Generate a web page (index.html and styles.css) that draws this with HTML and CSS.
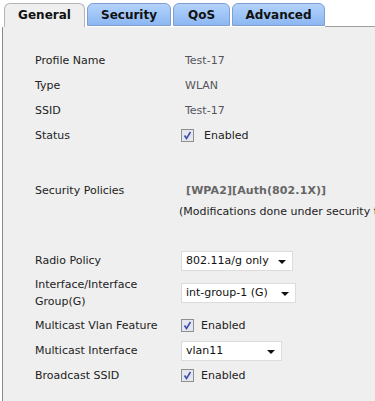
FILE: index.html
```html
<!DOCTYPE html>
<html>
<head>
    <title>WLAN Edit</title>
    <link rel="stylesheet" href="styles.css">
</head>
<body>
    <div class="tabs">
        <div class="tab active">General</div>
        <div class="tab tab-security">Security</div>
        <div class="tab tab-qos">QoS</div>
        <div class="tab tab-adv">Advanced</div>
        <div class="tab-rest"></div>
    </div>
    <div class="panel">
        <div class="row"><span class="label">Profile Name</span><span class="value">Test-17</span></div>
        <div class="row"><span class="label">Type</span><span class="value">WLAN</span></div>
        <div class="row"><span class="label">SSID</span><span class="value">Test-17</span></div>
        <div class="row"><span class="label">Status</span><span class="check wide"><svg width="13" height="13" viewBox="0 0 13 13"><rect x="0.5" y="0.5" width="12" height="12" fill="#e6e6ee" stroke="#8e8f8f"/><path d="M3.5 6.5 L5.5 9.5 L9.5 3" fill="none" stroke="#3d4fb0" stroke-width="1.6"/></svg>Enabled</span></div>

        <div class="row policies">
            <span class="label">Security Policies</span>
            <span class="policy-val">
                <span class="policy">[WPA2][Auth(802.1X)]</span>
                <span class="note">(Modifications done under security tab will appear after applying the changes.)</span>
            </span>
        </div>

        <div class="row radio"><span class="label">Radio Policy</span><span class="select s1">802.11a/g only<i class="arrow"></i></span></div>
        <div class="row tall"><span class="label">Interface/Interface<br>Group(G)</span><span class="select s2">int-group-1 (G)<i class="arrow"></i></span></div>
        <div class="row"><span class="label">Multicast Vlan Feature</span><span class="check"><svg width="13" height="13" viewBox="0 0 13 13"><rect x="0.5" y="0.5" width="12" height="12" fill="#e6e6ee" stroke="#8e8f8f"/><path d="M3.5 6.5 L5.5 9.5 L9.5 3" fill="none" stroke="#3d4fb0" stroke-width="1.6"/></svg>Enabled</span></div>
        <div class="row"><span class="label">Multicast Interface</span><span class="select s3">vlan11<i class="arrow"></i></span></div>
        <div class="row"><span class="label">Broadcast SSID</span><span class="check"><svg width="13" height="13" viewBox="0 0 13 13"><rect x="0.5" y="0.5" width="12" height="12" fill="#e6e6ee" stroke="#8e8f8f"/><path d="M3.5 6.5 L5.5 9.5 L9.5 3" fill="none" stroke="#3d4fb0" stroke-width="1.6"/></svg>Enabled</span></div>
    </div>
</body>
</html>
```

FILE: styles.css
```css
body {
    margin: 0;
    background-color: #ffffff;
    font-family: "DejaVu Sans", Verdana, sans-serif;
    font-size: 11px;
    color: #222222;
    height: 401px;
    overflow: hidden;
}
.tabs {
    display: flex;
    align-items: flex-end;
    height: 27px;
    padding-left: 4px;
}
.tab {
    line-height: 22px;
    font-weight: bold;
    font-size: 12px;
    text-align: center;
    border: 1px solid #7e9fd0;
    border-radius: 6px 6px 0 0;
    background: linear-gradient(#b3d3fb, #8cb7f2);
    color: #111111;
    margin-right: 2px;
    box-sizing: border-box;
    height: 23px;
    margin-bottom: 1px;
}
.tab.active {
    width: 81px;
    height: 24px;
    margin-bottom: 0;
    background: #efefef;
    border: 1px solid #b4b4b4;
    border-bottom: none;
}
.tab-security {
    width: 84px;
}
.tab-qos {
    width: 57px;
}
.tab-adv {
    width: 93px;
}
.tab-rest {
    flex: 1;
    border-bottom: 1px solid #a0a0a0;
    margin-left: -2px;
}
.panel {
    margin-left: 2px;
    background-color: #efefef;
    border-left: 1px solid #8a8a8a;
    padding: 21px 0 0 32px;
    height: 374px;
    box-sizing: border-box;
    overflow: hidden;
}
.row {
    display: flex;
    align-items: center;
    height: 25px;
}
.label {
    width: 144px;
    flex-shrink: 0;
}
.value {
    color: #555560;
    padding-left: 6px;
}
.check {
    display: flex;
    align-items: center;
    padding-left: 2px;
    gap: 7px;
}
.check.wide {
    gap: 10px;
}
.check svg {
    display: block;
}
.policies {
    margin-top: 29px;
    height: 43px;
    align-items: flex-start;
    padding-top: 7px;
    box-sizing: border-box;
}
.policy-val {
    display: flex;
    flex-direction: column;
    white-space: nowrap;
}
.policy {
    font-weight: bold;
    color: #666666;
    padding-left: 7px;
    letter-spacing: 0.1px;
}
.note {
    margin-top: 8px;
}
.radio {
    margin-top: 28px;
}
.tall {
    height: 40px;
}
.tall .label {
    line-height: 17px;
}
.select {
    position: relative;
    display: block;
    height: 20px;
    line-height: 18px;
    background: #ffffff;
    border: 1px solid #dcdcdc;
    box-sizing: border-box;
    padding-left: 4px;
    margin-left: 2px;
    color: #111111;
}
.s1 {
    width: 112px;
}
.s2 {
    width: 115px;
}
.s3 {
    width: 101px;
}
.arrow {
    position: absolute;
    right: 6px;
    top: 8px;
    width: 0;
    height: 0;
    border-left: 4px solid transparent;
    border-right: 4px solid transparent;
    border-top: 4px solid #111111;
}
```
